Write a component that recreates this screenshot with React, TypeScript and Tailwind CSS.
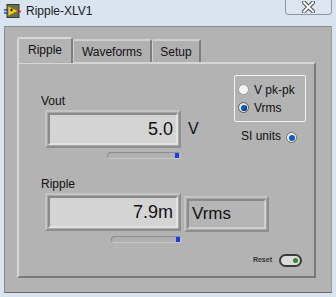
import React from "react";

const font = { fontFamily: '"Liberation Sans", Arial, sans-serif' };

function ViIcon() {
  return (
    <svg width="17" height="15" viewBox="0 0 17 15" aria-hidden>
      <rect x="3" y="0.5" width="12" height="13" fill="#6b6b5a" stroke="#3a3a30" />
      <path d="M4 2 L14 7 L4 12 Z" fill="#f2d40c" stroke="#8a7a00" strokeWidth="0.8" />
      <path d="M6 6 h3 M7.5 4.5 v3" stroke="#1a1a1a" strokeWidth="1" />
      <path d="M0 6 h4 M0 9 h4" stroke="#1b3fe0" strokeWidth="1.4" />
      <path d="M14 7.5 h3" stroke="#e01010" strokeWidth="1.4" />
    </svg>
  );
}

function CloseGlyph() {
  return (
    <svg width="13" height="12" viewBox="0 0 13 12" aria-hidden>
      <path
        d="M2 1.5 L11 10.5 M11 1.5 L2 10.5"
        stroke="#4a4a4a"
        strokeWidth="4"
        strokeLinecap="square"
      />
      <path
        d="M2 1.5 L11 10.5 M11 1.5 L2 10.5"
        stroke="#ffffff"
        strokeWidth="2"
        strokeLinecap="square"
      />
    </svg>
  );
}

function Radio({ on }: { on: boolean }) {
  return (
    <span
      className={`flex size-[11px] shrink-0 items-center justify-center rounded-full border ${
        on ? "border-[#5a5a5a] bg-[#e8e8e8]" : "border-[#9a9a9a] bg-[#f4f4f4]"
      }`}
    >
      {on ? (
        <span className="size-[6px] rounded-full bg-[#0a5cc0] shadow-[inset_-1px_-1px_0_#063a80]" />
      ) : null}
    </span>
  );
}

function Slider({ width }: { width: string }) {
  return (
    <div
      className={`relative h-[7px] ${width} rounded-full border border-t-[#8e8e8e] border-l-[#8e8e8e] border-b-[#c6c6c6] border-r-[#c6c6c6] bg-[#b0b0b0]`}
    >
      <span className="absolute right-[1px] top-[0px] h-[5px] w-[4px] bg-[#1c3cf0]" />
    </div>
  );
}

function NumBox({ value }: { value: string }) {
  return (
    <div className="flex h-[38px] w-[136px] border-2 border-t-[#c4c4c4] border-l-[#c4c4c4] border-b-[#8e8e8e] border-r-[#8e8e8e] bg-[#a8a8a8] p-[1px]">
      <div className="flex flex-1 items-center justify-end border-2 border-t-[#8a8a8a] border-l-[#8a8a8a] border-b-[#e2e2e2] border-r-[#e2e2e2] bg-[#d4d4d4] pr-[3px] text-[18px] text-[#111]">
        {value}
      </div>
    </div>
  );
}

export default function App() {
  return (
    <div
      className="flex h-[297px] w-[336px] flex-col bg-[#d9e4f0] text-[12px] text-[#111]"
      style={font}
    >
      <div className="flex h-[26px] items-start">
        <div className="mt-[4px] ml-[4px]">
          <ViIcon />
        </div>
        <span className="mt-[4px] ml-[5px] text-[12px] leading-[15px] text-[#1a1a1a]">
          Ripple-XLV1
        </span>
        <div className="ml-auto mr-[4px] flex h-[15px] w-[47px] items-center justify-center rounded-b-[4px] border border-t-0 border-[#8b98a8] bg-[#dde6f0]">
          <CloseGlyph />
        </div>
      </div>

      <div className="mx-[4px] flex h-[267px] flex-col border-l border-t border-b border-r border-l-[#8a8a8a] border-t-[#8a8a8a] border-b-[#6a6a6a] border-r-[#9a9a9a] bg-[#b3b3b3] pl-[12px] pt-[10px]">
        <div className="flex h-[25px] items-end">
          <div className="relative z-10 -mb-[1px] flex h-[26px] w-[56px] items-center justify-center rounded-t-[3px] border-l-2 border-t-2 border-r-2 border-l-[#d6d6d6] border-t-[#d6d6d6] border-r-[#7e7e7e] bg-[#b3b3b3] pb-[2px]">
            Ripple
          </div>
          <div className="flex h-[23px] w-[79px] items-center justify-center rounded-t-[2px] border-l border-t-2 border-r-2 border-l-[#d0d0d0] border-t-[#d0d0d0] border-r-[#7e7e7e] bg-[#b0b0b0]">
            Waveforms
          </div>
          <div className="flex h-[23px] w-[49px] items-center justify-center rounded-t-[2px] border-l border-t-2 border-r-2 border-l-[#d0d0d0] border-t-[#d0d0d0] border-r-[#7e7e7e] bg-[#b0b0b0]">
            Setup
          </div>
        </div>

        <div className="flex h-[216px] w-[299px] flex-col border-2 border-t-[#d6d6d6] border-l-[#d6d6d6] border-b-[#7a7a7a] border-r-[#7a7a7a] bg-[#b3b3b3] pl-[22px] pt-[11px]">
          <div className="flex">
            <div className="flex w-[193px] flex-col pt-[18px]">
              <span className="leading-[16px]">Vout</span>
              <div className="mt-[1px] ml-[4px] flex items-center">
                <NumBox value="5.0" />
                <span className="ml-[7px] text-[16px]">V</span>
              </div>
              <div className="ml-[66px] mt-[4px]">
                <Slider width="w-[74px]" />
              </div>
            </div>
            <div className="flex flex-col">
              <div className="flex h-[47px] w-[72px] flex-col justify-center gap-[2px] rounded-[2px] border border-[#f2f2f2] pl-[3px]">
                <div className="flex h-[16px] items-center gap-[5px]">
                  <Radio on={false} />
                  <span>V pk-pk</span>
                </div>
                <div className="flex h-[16px] items-center gap-[5px]">
                  <Radio on />
                  <span>Vrms</span>
                </div>
              </div>
              <div className="mt-[5px] ml-[7px] flex items-center gap-[5px]">
                <span>SI units</span>
                <span className="mt-[3px] flex size-[11px] items-center justify-center rounded-full border border-[#6a6a6a] bg-[#f0f0f0]">
                  <span className="size-[6px] rounded-full bg-[#0a5cc0]" />
                </span>
              </div>
            </div>
          </div>

          <span className="mt-[17px] leading-[16px]">Ripple</span>
          <div className="mt-[1px] ml-[4px] flex items-start">
            <NumBox value="7.9m" />
            <div className="ml-[3px] mt-[3px] flex h-[36px] w-[85px] border-2 border-t-[#c4c4c4] border-l-[#c4c4c4] border-b-[#8e8e8e] border-r-[#8e8e8e] bg-[#a8a8a8] p-[1px]">
              <div className="flex flex-1 items-center border-2 border-t-[#8a8a8a] border-l-[#8a8a8a] border-b-[#cfcfcf] border-r-[#cfcfcf] bg-[#b5b5b5] pl-[3px] text-[17px]">
                Vrms
              </div>
            </div>
          </div>
          <div className="ml-[70px] mt-[4px]">
            <Slider width="w-[71px]" />
          </div>

          <div className="mt-auto mb-[9px] mr-[12px] flex items-center justify-end gap-[7px]">
            <span className="text-[7px] font-bold text-[#333]">Reset</span>
            <span className="flex h-[13px] w-[23px] items-center justify-end rounded-full border-2 border-[#3a3a3a] bg-[#dcdcdc] pr-[2px]">
              <span className="size-[5px] rounded-full bg-[#2e8a2e]" />
            </span>
          </div>
        </div>
      </div>
    </div>
  );
}
